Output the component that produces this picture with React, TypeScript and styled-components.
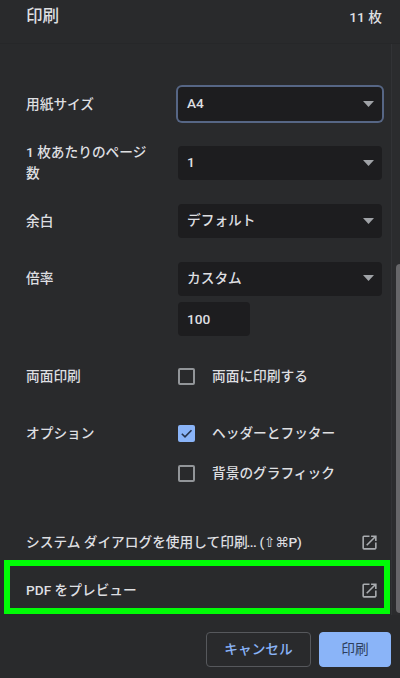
import React from "react";
import styled, { createGlobalStyle } from "styled-components";

const GlobalStyle = createGlobalStyle`
  * { box-sizing: border-box; }
  body { margin: 0; background: #292a2d; overflow: hidden; }
`;

const Panel = styled.main`
  display: flex;
  flex-direction: column;
  width: 400px;
  height: 678px;
  background: #292a2c;
  color: #dedfe1;
  font: 500 13.7px/21px Roboto, "Noto Sans CJK JP", sans-serif;
  overflow: hidden;
`;

const Header = styled.header`
  display: flex;
  flex: none;
  justify-content: space-between;
  height: 44px;
  padding: 6px 18px 0 26px;
  border-bottom: 1px solid #262729;
`;

const Title = styled.h1`
  margin: 0;
  font-size: 16.6px;
  font-weight: 500;
  line-height: 22px;
`;

const SheetCount = styled.span`
  line-height: 22px;
`;

const Body = styled.div`
  display: flex;
  flex: none;
  height: 571px;
`;

const Settings = styled.div`
  width: 392px;
  padding-top: 31px;
  border-right: 1px solid #323336;
`;

const Row = styled.div<{ $height: number }>`
  display: grid;
  grid-template-columns: 152px 204px;
  height: ${(p) => p.$height}px;
  padding-left: 26px;
`;

const Label = styled.div`
  display: flex;
  align-items: center;
  height: 58px;
  padding-right: 28px;
`;

const Controls = styled.div`
  display: flex;
  flex-direction: column;
  gap: 6px;
  padding-top: 12px;
`;

const Select = styled.button<{ $focused?: boolean }>`
  display: flex;
  flex: none;
  align-items: center;
  justify-content: space-between;
  width: 204px;
  height: 34px;
  padding: 0 8px 1px 9px;
  border: 0;
  border-radius: 4px;
  background: #1d1d1f;
  color: inherit;
  font: inherit;
  box-shadow: ${(p) => (p.$focused ? "0 0 0 2px #566685" : "none")};
`;

const Caret = styled.svg`
  width: 11px;
  height: 6px;
  fill: #a0a3a7;
`;

const ScaleInput = styled.input`
  width: 72px;
  height: 34px;
  padding: 0 9px;
  border: 0;
  border-radius: 4px;
  outline: 0;
  background: #1d1d1f;
  color: inherit;
  font: inherit;
`;

const CheckList = styled.div`
  display: flex;
  flex-direction: column;
  gap: 19px;
  padding-top: 19px;
`;

const CheckRow = styled.label`
  display: flex;
  align-items: center;
  gap: 17px;
  height: 21px;
`;

const Box = styled.span<{ $checked?: boolean }>`
  display: flex;
  flex: none;
  align-items: center;
  justify-content: center;
  width: 17px;
  height: 17px;
  border: ${(p) => (p.$checked ? "0" : "2px solid #929599")};
  border-radius: 2px;
  background: ${(p) => (p.$checked ? "#8ab4f8" : "transparent")};
`;

const Links = styled.nav`
  margin-top: 23px;
`;

const LinkRow = styled.div`
  position: relative;
  display: flex;
  align-items: center;
  justify-content: space-between;
  height: 48.5px;
  padding: 0 12px 0 26px;
`;

const LinkText = styled.span`
  white-space: nowrap;
`;

const Highlight = styled.span`
  position: absolute;
  inset: -7px 1px 1px 4px;
  border: 6px solid #00fb06;
`;

const Dots = styled.span`
  margin-left: -1px;
  letter-spacing: -0.6px;
`;

const Shortcut = styled.span`
  font-family: Roboto, "DejaVu Sans", sans-serif;
  letter-spacing: -0.3px;
`;

const ScrollTrack = styled.div`
  flex: 1;
  padding: 220px 0 0 4px;
  background: #2b2c2e;
`;

const ScrollThumb = styled.div`
  height: 349px;
  border-radius: 4px 0 0 4px;
  background: #666669;
`;

const Footer = styled.footer`
  display: flex;
  justify-content: flex-end;
  gap: 8px;
  padding: 17px 9px 0 0;
`;

const Button = styled.button<{ $primary?: boolean }>`
  width: ${(p) => (p.$primary ? 72 : 105)}px;
  height: 35px;
  padding: 0 0 1px;
  border: 1px solid ${(p) => (p.$primary ? "#8ab4f8" : "#56585c")};
  border-radius: 4px;
  background: ${(p) => (p.$primary ? "#8ab4f8" : "transparent")};
  color: ${(p) => (p.$primary ? "#2d3e5c" : "#8ab4f8")};
  font: inherit;
  font-weight: ${(p) => (p.$primary ? 400 : 500)};
`;

const OpenIcon = () => (
  <svg width="19" height="19" viewBox="0 0 24 24" fill="#a9acb0">
    <path d="M19 19H5V5h7V3H5a2 2 0 0 0-2 2v14a2 2 0 0 0 2 2h14c1.1 0 2-.9 2-2v-7h-2v7zM14 3v2h3.59l-9.83 9.83 1.41 1.41L19 6.41V10h2V3h-7z" />
  </svg>
);

function Dropdown({ value, focused }: { value: string; focused?: boolean }) {
  return (
    <Select $focused={focused}>
      {value}
      <Caret viewBox="0 0 11 6"><path d="M0 0h11L5.5 6z" /></Caret>
    </Select>
  );
}

function Check({ text, checked }: { text: string; checked?: boolean }) {
  return (
    <CheckRow>
      <Box $checked={checked}>
        {checked && (
          <svg width="17" height="17" viewBox="0 0 17 17" fill="none" stroke="#26334c" strokeWidth="1.6">
            <path d="M3.8 8.7 7 11.8l6.5-6.6" />
          </svg>
        )}
      </Box>
      {text}
    </CheckRow>
  );
}

export default function App() {
  return (
    <>
      <GlobalStyle />
      <Panel>
        <Header>
          <Title>印刷</Title>
          <SheetCount>11 枚</SheetCount>
        </Header>
        <Body>
          <Settings>
            <Row $height={59}>
              <Label>用紙サイズ</Label>
              <Controls><Dropdown value="A4" focused /></Controls>
            </Row>
            <Row $height={58}>
              <Label>1 枚あたりのページ数</Label>
              <Controls><Dropdown value="1" /></Controls>
            </Row>
            <Row $height={57.5}>
              <Label>余白</Label>
              <Controls><Dropdown value="デフォルト" /></Controls>
            </Row>
            <Row $height={97.5}>
              <Label>倍率</Label>
              <Controls>
                <Dropdown value="カスタム" />
                <ScaleInput defaultValue="100" />
              </Controls>
            </Row>
            <Row $height={57}>
              <Label>両面印刷</Label>
              <CheckList><Check text="両面に印刷する" /></CheckList>
            </Row>
            <Row $height={91}>
              <Label>オプション</Label>
              <CheckList>
                <Check text="ヘッダーとフッター" checked />
                <Check text="背景のグラフィック" />
              </CheckList>
            </Row>
            <Links>
              <LinkRow>
                <LinkText>
                  システム ダイアログを使用して印刷<Dots>...</Dots> <Shortcut>(⇧⌘P)</Shortcut>
                </LinkText>
                <OpenIcon />
              </LinkRow>
              <LinkRow>
                <LinkText>PDF をプレビュー</LinkText>
                <OpenIcon />
                <Highlight />
              </LinkRow>
            </Links>
          </Settings>
          <ScrollTrack><ScrollThumb /></ScrollTrack>
        </Body>
        <Footer>
          <Button>キャンセル</Button>
          <Button $primary>印刷</Button>
        </Footer>
      </Panel>
    </>
  );
}
